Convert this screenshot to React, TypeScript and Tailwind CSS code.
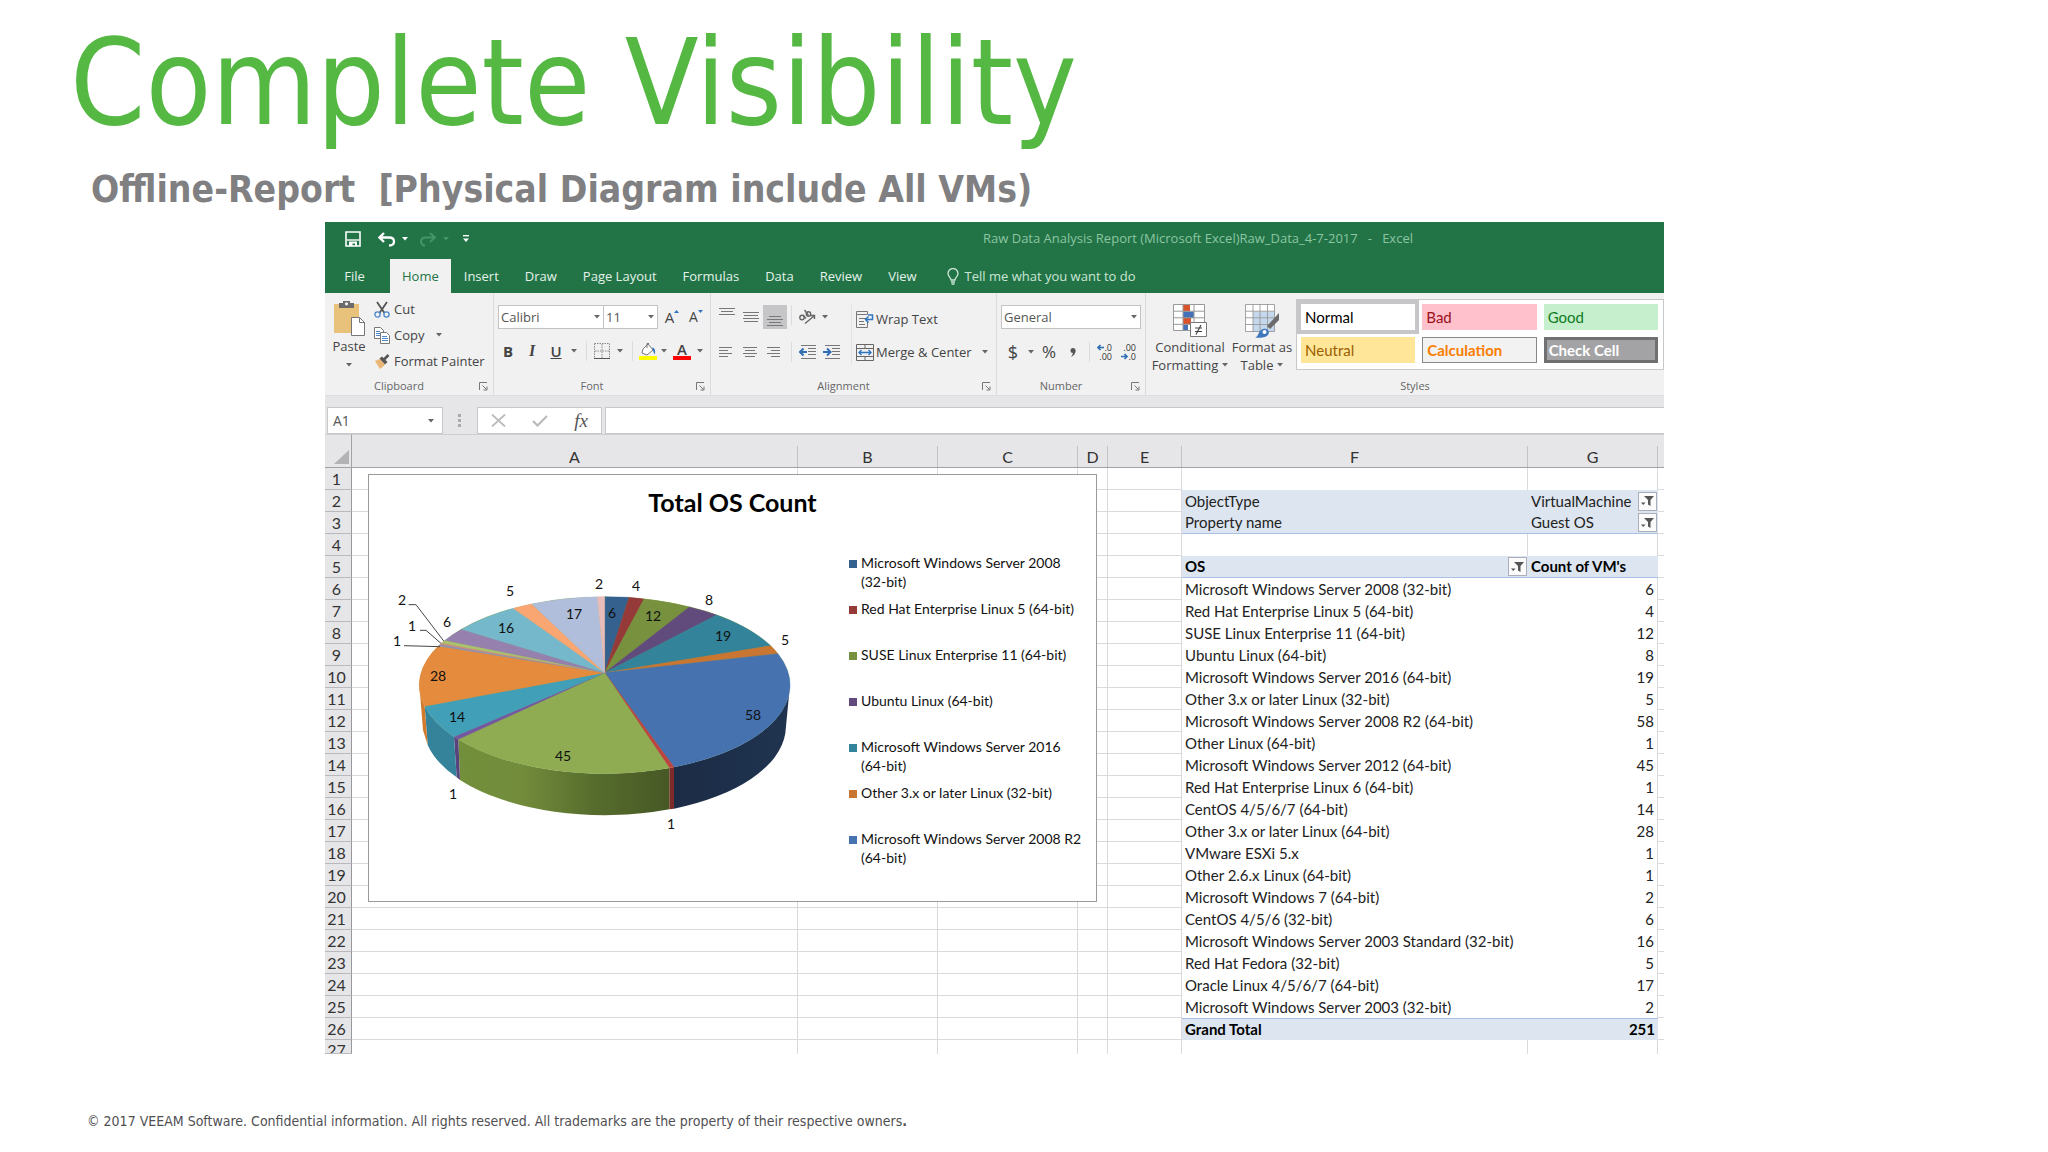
import React from "react";

type Row = { name: string; count: number };

const rows: Row[] = [
  { name: "Microsoft Windows Server 2008 (32-bit)", count: 6 },
  { name: "Red Hat Enterprise Linux 5 (64-bit)", count: 4 },
  { name: "SUSE Linux Enterprise 11 (64-bit)", count: 12 },
  { name: "Ubuntu Linux (64-bit)", count: 8 },
  { name: "Microsoft Windows Server 2016 (64-bit)", count: 19 },
  { name: "Other 3.x or later Linux (32-bit)", count: 5 },
  { name: "Microsoft Windows Server 2008 R2 (64-bit)", count: 58 },
  { name: "Other Linux (64-bit)", count: 1 },
  { name: "Microsoft Windows Server 2012 (64-bit)", count: 45 },
  { name: "Red Hat Enterprise Linux 6 (64-bit)", count: 1 },
  { name: "CentOS 4/5/6/7 (64-bit)", count: 14 },
  { name: "Other 3.x or later Linux (64-bit)", count: 28 },
  { name: "VMware ESXi 5.x", count: 1 },
  { name: "Other 2.6.x Linux (64-bit)", count: 1 },
  { name: "Microsoft Windows 7 (64-bit)", count: 2 },
  { name: "CentOS 4/5/6 (32-bit)", count: 6 },
  { name: "Microsoft Windows Server 2003 Standard (32-bit)", count: 16 },
  { name: "Red Hat Fedora (32-bit)", count: 5 },
  { name: "Oracle Linux 4/5/6/7 (64-bit)", count: 17 },
  { name: "Microsoft Windows Server 2003 (32-bit)", count: 2 },
];

/* ---------- small icons ---------- */

function Caret({ className = "text-[#666]" }: { className?: string }) {
  return (
    <svg width="6" height="4" viewBox="0 0 6 4" className={className} aria-hidden="true">
      <path d="M0 0h6L3 3.6z" fill="currentColor" />
    </svg>
  );
}

function Launcher() {
  return (
    <button type="button" aria-label="Dialog launcher" className="absolute right-[5px]">
      <svg width="9" height="9" viewBox="0 0 9 9" fill="none" stroke="#777" aria-hidden="true">
        <path d="M.5 8V.5H8M3.5 3.5l4 4M8 4.5V8H4.5" />
      </svg>
    </button>
  );
}

function SaveIcon() {
  return (
    <svg width="16" height="16" viewBox="0 0 16 16" aria-hidden="true">
      <path d="M1 1h14v14H1z" fill="none" stroke="#fff" strokeWidth="1.6" />
      <path d="M2 9h12" fill="none" stroke="#fff" strokeWidth="1.4" />
      <path d="M4 10.500h8V15h-2v-2.500H7.500V15H4z" fill="#fff" />
    </svg>
  );
}

function UndoIcon({ flip = false }: { flip?: boolean }) {
  return (
    <svg width="18" height="15" viewBox="0 0 18 15" aria-hidden="true">
      {flip ? (
        <path d="M12 1l5 4.5-5 4.5M16 5.5H8c-3 0-5 1.600-5 4 0 2 1.500 3.500 4 4.500" fill="none" stroke="#439467" strokeWidth="2" />
      ) : (
        <path d="M6 1L1.500 5.500 6 10M2 5.500h9c3 0 5 1.500 5 4s-2 4-5 4" fill="none" stroke="#fff" strokeWidth="2.300" />
      )}
    </svg>
  );
}

function PasteIcon() {
  return (
    <svg width="32" height="36" viewBox="0 0 32 36" aria-hidden="true">
      <path d="M1 4h25v29H1z" fill="#e8c27a" />
      <path d="M6 3h4V1h7v2h4v5H6z" fill="#6b6b6b" />
      <circle cx="13.500" cy="3.800" r="1.600" fill="#f2f2f3" />
      <path d="M18.500 17.500h8l5 5v13h-13z" fill="#fff" stroke="#777" />
      <path d="M26.500 17.500v5h5" fill="none" stroke="#777" />
    </svg>
  );
}

function CutIcon() {
  return (
    <svg width="16" height="17" viewBox="0 0 16 17" fill="none" aria-hidden="true">
      <path d="M3 1l7.500 11M13 1L5.500 12" stroke="#555" strokeWidth="1.800" />
      <circle cx="3.500" cy="13.500" r="2.600" stroke="#4a86c8" strokeWidth="1.300" />
      <circle cx="12.500" cy="13.500" r="2.600" stroke="#4a86c8" strokeWidth="1.300" />
    </svg>
  );
}

function CopyIcon() {
  return (
    <svg width="16" height="17" viewBox="0 0 16 17" aria-hidden="true">
      <path d="M.5.5h6l3 3v8h-9z" fill="#fff" stroke="#777" />
      <path d="M2 4.500h4M2 6.500h4M2 8.500h4" stroke="#4a86c8" />
      <path d="M6.500 5.500h6l3 3v8h-9z" fill="#fff" stroke="#777" />
      <path d="M8 9.500h5M8 11.500h6M8 13.500h6" stroke="#4a86c8" />
    </svg>
  );
}

function PainterIcon() {
  return (
    <svg width="16" height="15" viewBox="0 0 16 15" aria-hidden="true">
      <path d="M1 7l5-2 5 6-5 4z" fill="#eab676" />
      <path d="M5.500 4.500L8 2.500l5.500 5.500-2.500 2.500z" fill="#555" />
      <path d="M10 5.500L14.500 1" stroke="#555" strokeWidth="2.500" />
    </svg>
  );
}

function BordersIcon() {
  return (
    <svg width="16" height="16" viewBox="0 0 16 16" fill="none" stroke="#888" aria-hidden="true">
      <path d="M.5.5h15v15M.5.5v15M8 1v14M1 8h14" strokeDasharray="1.500 1" />
      <path d="M0 15.500h16" stroke="#555" />
    </svg>
  );
}

function FillIcon() {
  return (
    <svg width="18" height="18" viewBox="0 0 18 18" aria-hidden="true">
      <path d="M4 7l5-5 5 6-6 5-5-2z" fill="#fff" stroke="#777" />
      <path d="M8 6V1.500h2" fill="none" stroke="#777" />
      <path d="M13 5.500c3 .5 4 3.500 2.500 7C14.500 10 14 8 13 5.500z" fill="#2f75c0" />
      <path d="M0 14h18v4H0z" fill="#ff0" />
    </svg>
  );
}

const lineSets: Record<string, string> = {
  top: "M0 .5h16M2 3.500h12M0 6.500h16",
  middle: "M0 .5h16M1 3.500h14M0 6.500h16M1 9.500h14",
  bottom: "M2 .5h12M0 3.500h16M2 6.500h12M0 9.500h16",
  left: "M0 .5h13M0 3.500h9M0 6.500h13M0 9.500h9",
  center: "M0 .5h14M2 3.500h10M0 6.500h14M2 9.500h10",
  right: "M0 .5h13M4 3.500h9M0 6.500h13M4 9.500h9",
};

function Lines({ kind }: { kind: keyof typeof lineSets }) {
  return (
    <svg width="16" height="11" viewBox="0 0 16 11" stroke="#777" aria-hidden="true">
      <path d={lineSets[kind]} />
    </svg>
  );
}

function IndentIcon({ inward }: { inward?: boolean }) {
  return (
    <svg width="17" height="15" viewBox="0 0 17 15" fill="none" aria-hidden="true">
      <path d="M2 .5h15M9 3.500h8M9 6.500h8M9 9.500h8M2 13.500h15" stroke="#777" />
      <path d={inward ? "M0 7h7M4 3.500L7.500 7 4 10.500" : "M8 7H1M4.500 3.500L1 7l3.500 3.500"} stroke="#2f6db5" strokeWidth="2" />
    </svg>
  );
}

function OrientationIcon() {
  return (
    <svg width="18" height="16" viewBox="0 0 18 16" fill="none" stroke="#666" aria-hidden="true">
      <circle cx="4" cy="8.500" r="2.200" strokeWidth="1.400" />
      <path d="M5 6l3 3.500M6.500 1l4 5.500" strokeWidth="1.400" />
      <circle cx="10.500" cy="5" r="2.200" strokeWidth="1.400" />
      <path d="M7 14.500L16 7M12.500 6.500H16.500V10" strokeWidth="1.400" />
    </svg>
  );
}

function WrapIcon() {
  return (
    <svg width="18" height="17" viewBox="0 0 18 17" fill="none" aria-hidden="true">
      <path d="M.5.5h11v3h-11zM.5 3.500v13h11v-6M3 7.500h7M3 10.500h5M3 13.500h6" stroke="#777" />
      <path d="M12 4h4.500v4.500H10M12.500 5.500l-3 3 3 3" stroke="#2f75c0" strokeWidth="1.500" />
    </svg>
  );
}

function MergeIcon() {
  return (
    <svg width="18" height="17" viewBox="0 0 18 17" fill="none" aria-hidden="true">
      <path d="M.5.5h17v16H.5zM.5 4.500h17M.5 12.500h17M9 .5v4M9 12.500v4" stroke="#666" />
      <path d="M3 8.500h12M5.500 6L3 8.500 5.500 11M12.500 6L15 8.500 12.500 11" stroke="#2f75c0" strokeWidth="1.400" />
    </svg>
  );
}

function DecimalIcon({ more }: { more?: boolean }) {
  return (
    <svg width="18" height="20" viewBox="0 0 18 20" aria-hidden="true">
      <g fontFamily="Open Sans, sans-serif" fontSize="9" fill="#333" textAnchor="end">
        <text x="16" y="9">{more ? ".0" : ".00"}</text>
        <text x="16" y="18">{more ? ".00" : ".0"}</text>
      </g>
      <path
        d={more ? "M8 5.500H2M4.500 3L2 5.500 4.500 8" : "M1 14.500h6M4.500 12L7 14.500 4.500 17"}
        fill="none"
        stroke="#2f6db5"
        strokeWidth="1.700"
      />
    </svg>
  );
}

function ConditionalIcon() {
  return (
    <svg width="34" height="34" viewBox="0 0 34 34" aria-hidden="true">
      <path d="M.5.500h31v26H.5z" fill="#fff" />
      <path d="M10 1h7v6.500h-7zM10 14h8v6.500h-8z" fill="#d9532c" />
      <path d="M10 7.500h11V14H10zM10 20.500h5V27h-5z" fill="#4472b8" />
      <path d="M.5.500h31v26H.5zM.5 7.200h31M.5 13.800h31M.5 20.300h31M10 0v27M21 0v27" fill="none" stroke="#999" />
      <path d="M17.500 18.500h16v14h-16z" fill="#fff" stroke="#777" />
      <path d="M22 24h7M22 27.500h7M28 21l-5 9.500" stroke="#444" strokeWidth="1.200" />
    </svg>
  );
}

function FormatTableIcon() {
  return (
    <svg width="34" height="34" viewBox="0 0 34 34" aria-hidden="true">
      <path d="M.5.500h29v27H.5z" fill="#fff" />
      <path d="M8 7.500h22V28H8z" fill="#c5d9ee" />
      <path d="M.5.500h29v27H.5zM.5 7.200h29M.5 13.800h29M.5 20.500h29M8 0v28M15 0v28M22.500 0v28" fill="none" stroke="#999" strokeWidth=".9" />
      <path d="M34 9v7l-9 9-3-3z" fill="#6b6b6b" />
      <path d="M10 33.500c4-1 3-7 8-8.500 4-1 7 2 5.500 5-2 4-8 4-13.500 3.500z" fill="#3d78bd" />
      <circle cx="19.500" cy="28" r="2" fill="#fff" />
    </svg>
  );
}

function FunnelButton({ label }: { label: string }) {
  return (
    <button type="button" aria-label={label} className="flex h-[19px] w-[19px] shrink-0 items-center justify-center border border-[#a9aeb8] bg-[#fbfbfc]">
      <svg width="13" height="12" viewBox="0 0 13 12" aria-hidden="true">
        <path d="M3 1h10L9.500 5v6L7 9.500V5z" fill="#555" />
        <path d="M0 7.500h4.500L2.200 10z" fill="#555" />
      </svg>
    </button>
  );
}

/* ---------- ribbon ---------- */

function Group({ title, className, children }: { title: string; className: string; children: React.ReactNode }) {
  const last = title === "Styles";
  return (
    <section aria-label={title} className={`flex h-[102px] flex-col border-r border-[#dcdcde] ${className}`}>
      <div className="h-[85px]">{children}</div>
      <div className={`relative flex h-4 items-center justify-center text-[11px] leading-4 text-[#666] ${last ? "pl-5" : "pr-5"}`}>
        {title}
        {!last && <Launcher />}
      </div>
    </section>
  );
}

function Select({ label, value, className }: { label: string; value: string; className: string }) {
  return (
    <div className={`relative h-6 border border-[#c3c3c5] bg-white ${className}`}>
      <select aria-label={label} className="block h-full w-full appearance-none bg-transparent pl-[2px] text-[13px] leading-5 text-[#555] outline-none">
        <option>{value}</option>
      </select>
      <span className="pointer-events-none absolute inset-y-0 right-[3px] flex items-center">
        <Caret />
      </span>
    </div>
  );
}

function Tool({ label, className, children }: { label: string; className: string; children: React.ReactNode }) {
  return (
    <button type="button" aria-label={label} className={`flex h-6 shrink-0 items-center justify-center ${className}`}>
      {children}
    </button>
  );
}

function Sep({ className }: { className: string }) {
  return (
    <span className={`flex justify-center ${className}`}>
      <span className="h-5 w-px bg-[#dcdcde]" />
    </span>
  );
}

function Ribbon() {
  return (
    <div className="flex overflow-hidden bg-[#f1f1f2] text-[13px] leading-[18px] text-[#444]">
      <Group title="Clipboard" className="w-[169px] shrink-0">
        <div className="flex pl-2 pt-[7px]">
          <button type="button" className="flex w-8 flex-col items-center">
            <PasteIcon />
            <span className="mt-px">Paste</span>
            <span className="mt-2"><Caret /></span>
          </button>
          <div className="ml-[9px] flex flex-col gap-2">
            <button type="button" className="flex items-center gap-1"><CutIcon />Cut</button>
            <button type="button" className="flex items-center gap-1"><CopyIcon />Copy<span className="ml-2"><Caret /></span></button>
            <button type="button" className="flex items-center gap-1 whitespace-nowrap"><PainterIcon />Format Painter</button>
          </div>
        </div>
      </Group>

      <Group title="Font" className="w-[217px] shrink-0">
        <div className="pl-1 pt-3">
          <div className="flex">
            <Select label="Font" value="Calibri" className="w-[106px]" />
            <Select label="Font size" value="11" className="-ml-px w-[55px]" />
            <Tool label="Increase font size" className="ml-[2px] w-6 text-[15px]">
              A<svg width="5" height="14" viewBox="0 0 5 14" aria-hidden="true"><path d="M0 3l2.500-3L5 3z" fill="#2f75c0" /></svg>
            </Tool>
            <Tool label="Decrease font size" className="w-6 text-[14px]">
              A<svg width="5" height="14" viewBox="0 0 5 14" aria-hidden="true"><path d="M0 0h5L2.500 3z" fill="#2f75c0" /></svg>
            </Tool>
          </div>
          <div className="mt-[10px] flex items-center">
            <Tool label="Bold" className="w-5 text-[15px] font-bold">B</Tool>
            <Tool label="Italic" className="w-7 font-['Liberation_Serif',serif] text-[16px] font-bold italic">I</Tool>
            <Tool label="Underline" className="w-5 text-[15px] font-semibold underline">U</Tool>
            <Tool label="Underline options" className="w-4"><Caret /></Tool>
            <Sep className="w-2" />
            <Tool label="Borders" className="w-6"><BordersIcon /></Tool>
            <Tool label="Border options" className="w-3"><Caret /></Tool>
            <Sep className="w-3" />
            <Tool label="Fill colour" className="w-5"><FillIcon /></Tool>
            <Tool label="Fill colour options" className="w-3"><Caret /></Tool>
            <Tool label="Font colour" className="w-6">
              <span className="w-[18px] border-b-4 border-[#f00] text-[15px] font-semibold leading-[14px]">A</span>
            </Tool>
            <Tool label="Font colour options" className="w-3"><Caret /></Tool>
          </div>
        </div>
      </Group>

      <Group title="Alignment" className="w-[286px] shrink-0">
        <div className="flex pl-1 pt-3">
          <div>
            <div className="flex">
              <Tool label="Top align" className="w-6 pb-2"><Lines kind="top" /></Tool>
              <Tool label="Middle align" className="w-6"><Lines kind="middle" /></Tool>
              <Tool label="Bottom align" className="w-6 bg-[#c6c6c8] pt-2"><Lines kind="bottom" /></Tool>
              <Sep className="w-2" />
              <Tool label="Orientation" className="w-6"><OrientationIcon /></Tool>
              <Tool label="Orientation options" className="w-3"><Caret /></Tool>
            </div>
            <div className="mt-[11px] flex items-center">
              <Tool label="Align left" className="w-6"><Lines kind="left" /></Tool>
              <Tool label="Align centre" className="w-6"><Lines kind="center" /></Tool>
              <Tool label="Align right" className="w-6"><Lines kind="right" /></Tool>
              <Sep className="w-2" />
              <Tool label="Decrease indent" className="w-6"><IndentIcon /></Tool>
              <Tool label="Increase indent" className="w-6"><IndentIcon inward /></Tool>
            </div>
          </div>
          <div className="ml-2 h-[60px] border-l border-[#e2e2e4] pl-1">
            <button type="button" className="flex h-7 items-center gap-[2px] whitespace-nowrap"><WrapIcon />Wrap Text</button>
            <button type="button" className="mt-[5px] flex h-7 items-center gap-[2px] whitespace-nowrap"><MergeIcon />Merge &amp; Center<span className="ml-2"><Caret /></span></button>
          </div>
        </div>
      </Group>

      <Group title="Number" className="w-[149px] shrink-0">
        <div className="pl-1 pt-3">
          <Select label="Number format" value="General" className="w-[140px]" />
          <div className="mt-[11px] flex items-center">
            <Tool label="Currency" className="w-6 text-[18px]">$</Tool>
            <Tool label="Currency options" className="w-3"><Caret /></Tool>
            <Tool label="Percent" className="w-6 text-[17px]">%</Tool>
            <Tool label="Comma style" className="w-6">
              <svg width="6" height="9" viewBox="0 0 6 9" aria-hidden="true"><circle cx="3" cy="2.500" r="2.500" fill="#555" /><path d="M5.500 2.500C5.500 6 4 7.500 1 9c1.500-2 2-3.500 2-5z" fill="#555" /></svg>
            </Tool>
            <Sep className="w-2" />
            <Tool label="Increase decimal" className="w-6"><DecimalIcon more /></Tool>
            <Tool label="Decrease decimal" className="w-6"><DecimalIcon /></Tool>
          </div>
        </div>
      </Group>

      <Group title="Styles" className="min-w-0 grow border-r-0">
        <div className="flex items-start pt-[6px]">
          <button type="button" className="ml-2 flex w-[72px] flex-col items-center pt-[5px]">
            <ConditionalIcon />
            <span>Conditional</span>
            <span className="flex items-center gap-1">Formatting <Caret /></span>
          </button>
          <button type="button" className="ml-[2px] flex w-[68px] flex-col items-center whitespace-nowrap pt-[5px]">
            <FormatTableIcon />
            <span>Format as</span>
            <span className="flex items-center gap-1">Table <Caret /></span>
          </button>
          <div className="grid min-w-0 grow grid-cols-3 gap-[7px] border border-[#c8c8ca] bg-white pt-1 pb-[6px] pl-1 pr-[5px] font-['Lato',sans-serif] text-[15px] leading-[26px]">
            <button type="button" className="h-[26px] bg-white pl-1 text-left text-black outline-4 outline-[#c6c6c8]">Normal</button>
            <button type="button" className="h-[26px] bg-[#ffc1cb] pl-1 text-left text-[#9c1020]">Bad</button>
            <button type="button" className="h-[26px] bg-[#c6efce] pl-1 text-left text-[#0f7a1c]">Good</button>
            <button type="button" className="h-[26px] bg-[#ffe699] pl-1 text-left text-[#9c5f00]">Neutral</button>
            <button type="button" className="h-[26px] border border-[#888] bg-[#f2f2f2] pl-1 text-left font-bold leading-6 text-[#fa7d00]">Calculation</button>
            <button type="button" className="h-[26px] border-[3px] border-[#707072] bg-[#a3a3a5] pl-[2px] text-left font-bold leading-5 text-white">Check Cell</button>
          </div>
        </div>
      </Group>
    </div>
  );
}

/* ---------- chart ---------- */

/* Slice edges on the rim, in thirds of a pixel, clockwise from twelve o'clock. */
const slices: [number, number, string][] = [
  [747, 82, "#35618f"],
  [792, 87, "#953a38"],
  [928, 111, "#77913f"],
  [1010, 135, "#614a7c"],
  [1172, 227, "#33839b"],
  [1194, 251, "#c87631"],
  [882, 591, "#4673b0"],
  [868, 594, "#be4441"],
  [235, 508, "#8fac53"],
  [222, 500, "#7457a0"],
  [134, 409, "#429fb8"],
  [175, 228, "#e48b3e"],
  [180, 223, "#9092b5"],
  [185, 219, "#d08c86"],
  [195, 211, "#acc36d"],
  [245, 178, "#9580ae"],
  [400, 115, "#76b8cb"],
  [455, 102, "#f9a673"],
  [652, 80, "#b0bedb"],
  [674, 80, "#e8bcba"],
];

const sliceLabels: [number, number, string][] = [
  [232, 48, "6"], [256, 21, "4"], [273, 51, "12"], [329, 35, "8"], [343, 71, "19"],
  [405, 75, "5"], [373, 150, "58"], [291, 259, "1"], [183, 191, "45"], [73, 229, "1"],
  [77, 152, "14"], [58, 111, "28"], [17, 76, "1"], [32, 61, "1"], [22, 35, "2"],
  [67, 57, "6"], [126, 63, "16"], [130, 26, "5"], [194, 49, "17"], [219, 19, "2"],
];

function Pie() {
  return (
    <svg width="440" height="270" viewBox="0 0 440 270" role="img" aria-label="Total OS Count pie chart">
      <defs>
        <linearGradient id="green"><stop offset="0" stopColor="#728f3b" /><stop offset=".3" stopColor="#728c3b" /><stop offset=".65" stopColor="#566c2d" /><stop offset="1" stopColor="#475825" /></linearGradient>
        <linearGradient id="blue"><stop offset="0" stopColor="#1d2c46" /><stop offset=".6" stopColor="#1d304c" /><stop offset="1" stopColor="#20344f" /></linearGradient>
      </defs>
      <g transform="scale(.33333)">
        <path d="M1230 345A556 265 0 0 1 882 591V716A545 267 0 0 0 1216 490Z" fill="url(#blue)" />
        <path d="M882 591L868 594V718L882 716Z" fill="#7c2b29" />
        <path d="M868 594A556 265 0 0 1 235 508L240 630A545 267 0 0 0 868 718Z" fill="url(#green)" />
        <path d="M235 508L222 500L230 622L240 630Z" fill="#59437c" />
        <path d="M222 500A556 265 0 0 1 134 409L143 525A545 267 0 0 0 230 622Z" fill="#35839a" />
        <path d="M134 409A556 265 0 0 1 118 345L129 480L143 525Z" fill="#d27a2e" />
        <ellipse cx="674" cy="345" rx="556" ry="265" fill="#8fac53" />
        {slices.map(([x, y, color], i) => {
          const [px, py] = i ? slices[i - 1] : [674, 80];
          return <path key={i} d={`M674 308L${px} ${py}A556 265 0 0 1 ${x} ${y}Z`} fill={color} stroke={color} strokeWidth="1" />;
        })}
        <path d="M86 104H108L192 214M120 181H138L183 220M72 227L180 230" fill="none" stroke="#444" strokeWidth="3" />
      </g>
      <g fontFamily="Lato, sans-serif" fontSize="14" fill="#111" textAnchor="middle">
        {sliceLabels.map(([x, y, t], i) => (
          <text key={i} x={x} y={y}>{t}</text>
        ))}
      </g>
    </svg>
  );
}

const legend: [string, string][] = [
  ["Microsoft Windows Server 2008 (32-bit)", "bg-[#35618f]"],
  ["Red Hat Enterprise Linux 5 (64-bit)", "bg-[#953a38]"],
  ["SUSE Linux Enterprise 11 (64-bit)", "bg-[#77913f]"],
  ["Ubuntu Linux (64-bit)", "bg-[#614a7c]"],
  ["Microsoft Windows Server 2016 (64-bit)", "bg-[#33839b]"],
  ["Other 3.x or later Linux (32-bit)", "bg-[#c87631]"],
  ["Microsoft Windows Server 2008 R2 (64-bit)", "bg-[#4673b0]"],
];

function Chart() {
  return (
    <figure className="absolute left-[43px] top-10 h-[428px] w-[729px] border border-[#9a9a9c] bg-white">
      <figcaption className="pt-[11px] text-center text-[25px] font-bold leading-8 text-black">Total OS Count</figcaption>
      <div className="flex pl-[11px]">
        <div className="pt-[52px]"><Pie /></div>
        <ul className="ml-[29px] mt-[35px] w-[236px]">
          {legend.map(([text, color]) => (
            <li key={text} className="flex h-[46px] gap-1 text-[14px] leading-[19px] text-[#111]">
              <span className={`mt-[7px] h-2 w-2 shrink-0 ${color}`} />
              <span>{text}</span>
            </li>
          ))}
        </ul>
      </div>
    </figure>
  );
}

/* ---------- worksheet ---------- */

const grid = "border-r border-b border-[#d9d9de]";
const vertical = "border-r border-[#d9d9de]";

function SheetRow({ n }: { n: number }) {
  const f = "pl-[3px] text-left whitespace-nowrap";
  let cells: React.ReactNode;
  if (n === 2 || n === 3) {
    const line = n === 3 ? "border-b border-[#a9bfe4]" : "";
    cells = (
      <>
        <td className={`${f} bg-[#dce5f0] ${line}`}>{n === 2 ? "ObjectType" : "Property name"}</td>
        <td className={`bg-[#dce5f0] pl-[3px] pr-px ${line}`}>
          <div className="flex items-center justify-between whitespace-nowrap">
            {n === 2 ? "VirtualMachine" : "Guest OS"}
            <FunnelButton label="Filter" />
          </div>
        </td>
      </>
    );
  } else if (n === 5) {
    cells = (
      <>
        <td className="border-b border-[#a9bfe4] bg-[#dce5f0] pl-[3px] pr-px font-bold text-black">
          <div className="flex items-center justify-between">OS<FunnelButton label="Filter by OS" /></div>
        </td>
        <td className="border-b border-[#a9bfe4] bg-[#dce5f0] pl-[3px] font-bold whitespace-nowrap text-black">Count of VM's</td>
      </>
    );
  } else if (n >= 6 && n <= 25) {
    const row = rows[n - 6];
    cells = (
      <>
        <td className={f}>{row.name}</td>
        <td className={`pr-[3px] text-right ${vertical}`}>{row.count}</td>
      </>
    );
  } else if (n === 26) {
    cells = (
      <>
        <td className="border-t border-[#a9bfe4] bg-[#dce5f0] pl-[3px] font-bold text-black">Grand Total</td>
        <td className="border-t border-[#a9bfe4] bg-[#dce5f0] pr-[3px] text-right font-bold text-black">251</td>
      </>
    );
  } else {
    cells = (
      <>
        <td className={vertical} />
        <td className={vertical} />
      </>
    );
  }
  const last = n === 27;
  const cell = last ? vertical : grid;
  return (
    <tr className={last ? "h-[14px]" : "h-[22px]"}>
      <th scope="row" className="overflow-hidden border-r border-b border-[#b9b9bd] border-r-[#98989c] bg-[#e6e6e8] pr-[3px] text-center text-[16px] font-normal text-[#333]">
        <div className={last ? "h-[13px] overflow-hidden leading-5" : ""}>{n}</div>
      </th>
      <td className={cell} />
      <td className={cell} />
      <td className={cell} />
      <td className={cell} />
      <td className={cell} />
      {cells}
      <td className={last ? "" : "border-b border-[#d9d9de]"} />
    </tr>
  );
}

function Sheet() {
  return (
    <div className="relative overflow-hidden font-['Lato',sans-serif]">
      <table className="w-full table-fixed border-separate border-spacing-0 text-[15px] leading-[21px] text-[#222]">
        <colgroup>
          <col className="w-[27px]" />
          <col />
          <col className="w-[140px]" />
          <col className="w-[140px]" />
          <col className="w-[30px]" />
          <col className="w-[74px]" />
          <col className="w-[346px]" />
          <col className="w-[130px]" />
          <col className="w-[6px]" />
        </colgroup>
        <thead>
          <tr className="h-[34px] bg-[#e6e5e7]">
            <td className="border-r border-t border-b border-[#a3a3a6] border-t-[#cfcfd2] p-0">
              <svg width="16" height="16" viewBox="0 0 16 16" className="mt-3 ml-2" aria-hidden="true"><path d="M16 1v14H1z" fill="#b3b3b6" /></svg>
            </td>
            {["A", "B", "C", "D", "E", "F", "G", ""].map((c) => (
              <th key={c} scope="col" className="border-t border-b border-[#a3a3a6] border-t-[#cfcfd2] p-0 text-[16px] font-normal text-[#333]">
                <div className={`mt-[11px] h-[21px] leading-[21px] ${c ? "border-r border-[#c3c3c6]" : ""}`}>{c}</div>
              </th>
            ))}
          </tr>
        </thead>
        <tbody>
          {Array.from({ length: 27 }, (_, i) => (
            <SheetRow key={i} n={i + 1} />
          ))}
        </tbody>
      </table>
      <Chart />
    </div>
  );
}

/* ---------- page ---------- */

const tabs = ["Insert", "Draw", "Page Layout", "Formulas", "Data", "Review", "View"];

export default function App() {
  return (
    <div className="min-h-screen bg-white font-['Open_Sans',sans-serif]">
      <h1 className="pl-[70px] pt-[9px] font-['DejaVu_Sans_Condensed','DejaVu_Sans',sans-serif] text-[120px] leading-[148px] whitespace-nowrap text-[#54b843]">Complete Visibility</h1>
      <h2 className="pl-[91px] font-['DejaVu_Sans_Condensed','DejaVu_Sans',sans-serif] text-[37px] leading-[65px] font-bold whitespace-pre text-[#808082]">Offline-Report  [Physical Diagram include All VMs)</h2>

      <main className="ml-[325px] mr-[384px]">
        <header className="bg-[#227447] text-[13px] leading-[18px]">
          <div className="relative flex h-[37px] items-center pb-[3px] pl-5">
            <button type="button" aria-label="Save"><SaveIcon /></button>
            <button type="button" aria-label="Undo" className="ml-[17px]"><UndoIcon /></button>
            <button type="button" aria-label="Undo options" className="ml-[6px]"><Caret className="text-white" /></button>
            <button type="button" aria-label="Redo" className="ml-[10px]"><UndoIcon flip /></button>
            <button type="button" aria-label="Redo options" className="ml-[7px]"><Caret className="text-[#439467]" /></button>
            <button type="button" aria-label="Customize toolbar" className="ml-[14px]">
              <svg width="6" height="8" viewBox="0 0 6 8" aria-hidden="true"><path d="M0 .7h6" stroke="#fff" strokeWidth="1.400" /><path d="M0 3.500h6l-3 3.600z" fill="#fff" /></svg>
            </button>
            <p className="ml-[514px] pb-[2px] whitespace-pre text-[#8cc5a2]">Raw Data Analysis Report (Microsoft Excel)Raw_Data_4-7-2017   -   Excel</p>
          </div>
          <nav className="flex h-[34px] items-stretch text-[#e4f2e9]">
            <button type="button" className="w-[65px] pr-[6px]">File</button>
            <button type="button" className="bg-[#f1f1f2] px-3 text-[#227447]">Home</button>
            {tabs.map((t) => (
              <button key={t} type="button" className="px-[13px] whitespace-nowrap first-of-type:pl-0">{t}</button>
            ))}
            <button type="button" className="ml-1 flex items-center gap-[6px] px-[13px] whitespace-nowrap text-[#cbe5d5]">
              <svg width="12" height="17" viewBox="0 0 12 17" fill="none" stroke="currentColor" strokeWidth="1.300" aria-hidden="true">
                <path d="M4 12c0-2.500-3-3.500-3-6.500a5 5 0 0 1 10 0c0 3-3 4-3 6.500zM4 14h4M4.500 16h3" />
              </svg>
              Tell me what you want to do
            </button>
          </nav>
        </header>

        <Ribbon />

        <div className="flex h-[39px] border-t border-[#dddde0] bg-[#e6e5e7] pt-[11px] pl-[2px]">
          <div className="relative h-[27px] w-[116px] border border-[#c8c8cb] bg-white">
            <input aria-label="Name box" defaultValue="A1" className="h-full w-full bg-transparent pl-[5px] text-[14px] text-[#555] outline-none" />
            <span className="pointer-events-none absolute inset-y-0 right-2 flex items-center"><Caret /></span>
          </div>
          <svg width="4" height="27" viewBox="0 0 4 27" className="ml-[15px]" fill="#aaa" aria-hidden="true"><path d="M0 7h3v3H0zM0 12h3v3H0zM0 17h3v3H0z" /></svg>
          <div className="ml-[15px] flex h-[27px] w-[125px] items-center justify-around border border-[#c8c8cb] bg-white">
            <button type="button" aria-label="Cancel"><svg width="15" height="13" viewBox="0 0 15 13" stroke="#bbb" strokeWidth="1.800" aria-hidden="true"><path d="M1 .5l13 12M14 .5l-13 12" /></svg></button>
            <button type="button" aria-label="Enter"><svg width="16" height="12" viewBox="0 0 16 12" fill="none" stroke="#bbb" strokeWidth="2.200" aria-hidden="true"><path d="M1 6l4.500 4.500L15 1" /></svg></button>
            <button type="button" aria-label="Insert function" className="font-['Liberation_Serif',serif] text-[19px] leading-5 italic text-[#555]">fx</button>
          </div>
          <input aria-label="Formula" className="ml-[3px] h-[27px] min-w-0 grow border border-r-0 border-[#c8c8cb] bg-white px-1 text-[13px] outline-none" />
        </div>

        <Sheet />
      </main>

      <footer className="mt-[58px] pl-[87px] font-['DejaVu_Sans_Condensed','DejaVu_Sans',sans-serif] text-[14px] leading-[18px] text-[#505052]">
        © 2017 VEEAM Software. Confidential information. All rights reserved. All trademarks are the property of their respective owners<b>.</b>
      </footer>
    </div>
  );
}
